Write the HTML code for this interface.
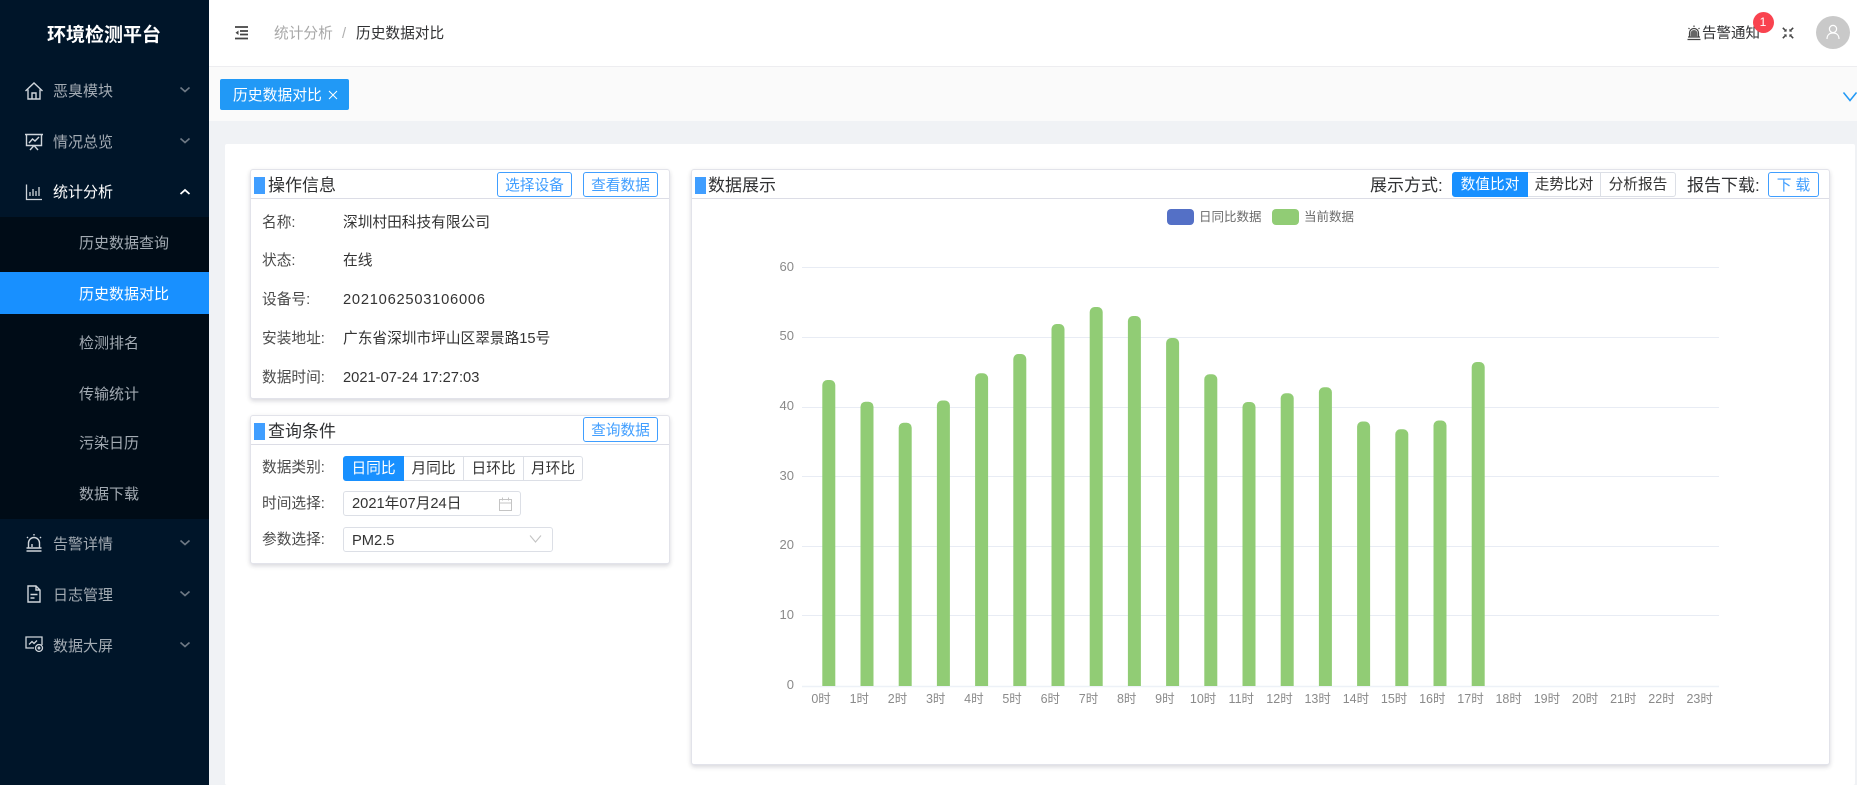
<!DOCTYPE html>
<html lang="zh-CN"><head><meta charset="utf-8"><title>环境检测平台</title>
<style>
*{box-sizing:border-box;margin:0;padding:0}
html,body{width:1857px;height:785px;overflow:hidden;background:#f0f2f5;font-family:"Liberation Sans","Noto Sans CJK SC",sans-serif;color:#303133}
div,span,svg{position:absolute}
.t{line-height:20px;height:20px;white-space:nowrap}
.side{left:0;top:0;width:209px;height:785px;background:#001529}
.sub{left:0;top:217px;width:209px;height:302px;background:#000c17}
.act{left:0;top:272px;width:209px;height:41.5px;background:#1890ff}
.m{left:53px;font-size:15px;color:#a3abb3}
.s{left:79px;font-size:15px;color:#a3abb3}
.p{background:#fff;border:1px solid #e2e3ea;border-radius:3px;box-shadow:0 2px 5px rgba(0,0,40,.16)}
.hr{height:1px;background:#dcdde6}
.mk{width:11px;height:17px;background:#409eff}
.ttl{font-size:17px;color:#303133}
.b{border:1px solid #409eff;border-radius:3px;background:#fff;color:#409eff;font-size:14.7px;text-align:center;height:25px;line-height:26px;white-space:nowrap}
.l{left:262px;font-size:14.7px;color:#4a4a4a}
.v{left:343px;font-size:14.7px;color:#333}
.g{border:1px solid #dcdfe6;background:#fff;color:#333;font-size:14.7px;text-align:center;height:25px;line-height:25px;white-space:nowrap}
.on{background:#1890ff;border-color:#1890ff;color:#fff}
.inp{border:1px solid #dcdfe6;border-radius:3px;background:#fff;height:25px;line-height:25px;padding-left:8px;font-size:14.7px;color:#333;white-space:nowrap}
</style></head><body>

<div class="side"></div><div class="sub"></div><div class="act"></div>
<div class="t" style="left:47px;top:26px;font-size:19px;font-weight:700;color:#fff">环境检测平台</div>

<svg style="left:24px;top:81px" width="20" height="20" viewBox="0 0 20 20" fill="none" stroke="#cfd5db" stroke-width="1.4"><path d="M1.500 10 10 2l8.500 8M4 8.500V18h12V8.500M8 18v-6h4v6"/></svg>
<svg style="left:24px;top:132px" width="20" height="20" viewBox="0 0 20 20" fill="none" stroke="#cfd5db" stroke-width="1.400"><path d="M1 2.500h18M2.500 2.500v11h15v-11M6 18l4-4.500 4 4.500M5 11l3.500-4 2.500 2 4-4"/></svg>
<svg style="left:25px;top:183px" width="18" height="18" viewBox="0 0 18 18" fill="none" stroke="#cfd5db" stroke-width="1.300"><path d="M1.500 1.500V16.500H17M5 13V9M8 13V6M11 13V8M14 13V4"/></svg>
<svg style="left:25px;top:533px" width="18" height="20" viewBox="0 0 18 20" fill="none" stroke="#cfd5db" stroke-width="1.400"><path d="M3.500 15V10a5.500 5.500 0 0 1 11 0v5M1.500 15h15M1.500 18h15M9 1v1.500M2 4l1 1M16 4l-1 1M7 14v-3"/></svg>
<svg style="left:26px;top:584px" width="16" height="20" viewBox="0 0 16 20" fill="none" stroke="#cfd5db" stroke-width="1.400"><path d="M2 2h8l4 4v12H2zM10 2v4h4M4.500 10.500h7M4.500 14h4"/></svg>
<svg style="left:24px;top:635px" width="20" height="18" viewBox="0 0 20 18" fill="none" stroke="#cfd5db" stroke-width="1.300"><path d="M10 13H2V2h16v8M5 9.500l3-3 2 2 3-3"/><circle cx="15" cy="13" r="3.500"/><circle cx="15" cy="13" r=".8"/></svg>

<div class="t m" style="top:82px">恶臭模块</div>
<div class="t m" style="top:133px">情况总览</div>
<div class="t m" style="top:183px;color:#fff">统计分析</div>
<div class="t s" style="top:234px">历史数据查询</div>
<div class="t s" style="top:285px;color:#fff">历史数据对比</div>
<div class="t s" style="top:334px">检测排名</div>
<div class="t s" style="top:385px">传输统计</div>
<div class="t s" style="top:434px">污染日历</div>
<div class="t s" style="top:485px">数据下载</div>
<div class="t m" style="top:535px">告警详情</div>
<div class="t m" style="top:586px">日志管理</div>
<div class="t m" style="top:637px">数据大屏</div>

<svg style="left:179px;top:85px" width="12" height="10" fill="none" stroke="#6d7884" stroke-width="1.600"><path d="M1.500 2.500 6 6.500l4.500-4"/></svg>
<svg style="left:179px;top:136px" width="12" height="10" fill="none" stroke="#6d7884" stroke-width="1.600"><path d="M1.500 2.500 6 6.500l4.500-4"/></svg>
<svg style="left:179px;top:187px" width="12" height="10" fill="none" stroke="#fff" stroke-width="1.800"><path d="M1.500 7 6 3l4.500 4"/></svg>
<svg style="left:179px;top:538px" width="12" height="10" fill="none" stroke="#6d7884" stroke-width="1.600"><path d="M1.500 2.500 6 6.500l4.500-4"/></svg>
<svg style="left:179px;top:589px" width="12" height="10" fill="none" stroke="#6d7884" stroke-width="1.600"><path d="M1.500 2.500 6 6.500l4.500-4"/></svg>
<svg style="left:179px;top:640px" width="12" height="10" fill="none" stroke="#6d7884" stroke-width="1.600"><path d="M1.500 2.500 6 6.500l4.500-4"/></svg>

<!-- header -->
<div style="left:209px;top:0;width:1648px;height:67px;background:#fff;border-bottom:1px solid #ededf0"></div>
<svg style="left:234px;top:25px" width="15" height="15" fill="none" stroke="#444"><path stroke-width="1.700" d="M1 2h13M6 6h8M6 9.500h8M1 13.500h13"/><path d="M4.500 5.500 1.500 7.700 4.500 10z" fill="#444" stroke="none"/></svg>
<div class="t" style="left:274px;top:24px;font-size:14.700px;color:#a8a8a8">统计分析</div>
<div class="t" style="left:342px;top:24px;font-size:14.700px;color:#b0b0b0">/</div>
<div class="t" style="left:356px;top:24px;font-size:14.700px;color:#303133">历史数据对比</div>

<svg style="left:1687px;top:25px" width="14" height="16" fill="none" stroke="#444" stroke-width="1.200"><path d="M2.500 12V8a4.500 4.500 0 0 1 9 0v4M.5 14.500h13M7 .5v1.500M1.500 3l1 1M12.500 3l-1 1M1 12h12" /><path d="M3.500 12V8.500a3.500 3.500 0 0 1 7 0V12z" fill="#666" stroke="none"/></svg>
<div class="t" style="left:1702px;top:24px;font-size:14.500px;color:#303133">告警通知</div>
<div style="left:1752.500px;top:11.500px;width:21px;height:21px;border-radius:50%;background:#f9434f;color:#fff;font-size:12px;line-height:21px;text-align:center">1</div>
<svg style="left:1782px;top:27px" width="12" height="12" fill="none" stroke="#444" stroke-width="1.500"><path d="M.8.800l3 3M11.200.800l-3 3M.8 11.200l3-3M11.200 11.200l-3-3"/><path d="M4.600 1.800 4.600 4.600 1.800 4.600zM7.400 1.800 7.400 4.600 10.200 4.600zM4.600 10.200 4.600 7.400 1.800 7.400zM7.400 10.200 7.400 7.400 10.200 7.400z" fill="#444" stroke="none"/></svg>
<div style="left:1816px;top:16px;width:34px;height:33px;border-radius:50%;background:#c9c9c9"></div>
<svg style="left:1825px;top:24px" width="16" height="16" fill="none" stroke="#fff" stroke-width="1.200"><circle cx="8" cy="5" r="3.600"/><path d="M2 15c0-4 2.500-6 6-6s6 2 6 6"/></svg>

<!-- tag bar -->
<div style="left:209px;top:67px;width:1648px;height:54px;background:#fafafa"></div>
<div style="left:220px;top:79px;width:129px;height:31px;background:#2199f6;border-radius:2px"></div>
<div class="t" style="left:233px;top:86px;font-size:14.800px;color:#fff">历史数据对比</div>
<svg style="left:328px;top:90px" width="10" height="10" stroke="#fff" stroke-width="1"><path d="M1 1l8 8M9 1l-8 8"/></svg>
<svg style="left:1843px;top:90px" width="14" height="14" fill="none" stroke="#2199f6" stroke-width="1.500"><path d="M.5 2.500 7 10.500l6.500-8"/></svg>

<!-- content -->
<div style="left:225px;top:144px;width:1630px;height:641px;background:#fff;border-radius:2px"></div>

<!-- panel 1 -->
<div class="p" style="left:250px;top:169px;width:420px;height:230px"></div>
<div class="hr" style="left:251px;top:198px;width:418px"></div>
<div class="mk" style="left:254px;top:177px"></div>
<div class="t ttl" style="left:268px;top:176px">操作信息</div>
<div class="b" style="left:497px;top:172px;width:75px">选择设备</div>
<div class="b" style="left:583px;top:172px;width:75px">查看数据</div>
<div class="t l" style="top:213px">名称:</div><div class="t v" style="top:213px">深圳村田科技有限公司</div>
<div class="t l" style="top:251px">状态:</div><div class="t v" style="top:251px">在线</div>
<div class="t l" style="top:290px">设备号:</div><div class="t v" style="top:290px;letter-spacing:.75px">2021062503106006</div>
<div class="t l" style="top:329px">安装地址:</div><div class="t v" style="top:329px">广东省深圳市坪山区翠景路15号</div>
<div class="t l" style="top:368px">数据时间:</div><div class="t v" style="top:368px">2021-07-24 17:27:03</div>

<!-- panel 2 -->
<div class="p" style="left:250px;top:415px;width:420px;height:149px"></div>
<div class="hr" style="left:251px;top:444px;width:418px"></div>
<div class="mk" style="left:254px;top:423px"></div>
<div class="t ttl" style="left:268px;top:422px">查询条件</div>
<div class="b" style="left:583px;top:417px;width:75px">查询数据</div>
<div class="t l" style="top:458px">数据类别:</div>
<div class="t l" style="top:494px">时间选择:</div>
<div class="t l" style="top:530px">参数选择:</div>
<div class="g on" style="left:343px;top:456px;width:61px;border-radius:3px 0 0 3px">日同比</div>
<div class="g" style="left:404px;top:456px;width:60px;border-left:0">月同比</div>
<div class="g" style="left:464px;top:456px;width:60px;border-left:0">日环比</div>
<div class="g" style="left:524px;top:456px;width:59px;border-left:0;border-radius:0 3px 3px 0">月环比</div>
<div class="inp" style="left:343px;top:491px;width:178px">2021年07月24日</div>
<svg style="left:498px;top:497px" width="15" height="14" fill="none" stroke="#c4c4c4" stroke-width="1"><path d="M1.500 2.500h12v11h-12zM1.500 6h12M4.500 .5v3M10.500 .5v3"/></svg>
<div class="inp" style="left:343px;top:527px;width:210px;line-height:26px">PM2.5</div>
<svg style="left:529px;top:534px" width="13" height="10" fill="none" stroke="#c4c4c4" stroke-width="1.100"><path d="M1 1.500 6.500 8 12 1.500"/></svg>

<!-- panel 3 -->
<div class="p" style="left:691px;top:169px;width:1139px;height:596px"></div>
<div class="hr" style="left:692px;top:198px;width:1137px"></div>
<div class="mk" style="left:695px;top:177px"></div>
<div class="t ttl" style="left:708px;top:176px">数据展示</div>
<div class="t ttl" style="left:1370px;top:176px">展示方式:</div>
<div class="g on" style="left:1452px;top:172px;width:76px;border-radius:3px 0 0 3px">数值比对</div>
<div class="g" style="left:1528px;top:172px;width:73px;border-left:0">走势比对</div>
<div class="g" style="left:1601px;top:172px;width:75px;border-left:0;border-radius:0 3px 3px 0">分析报告</div>
<div class="t ttl" style="left:1687px;top:176px">报告下载:</div>
<div class="b" style="left:1768px;top:172px;width:51px">下 载</div>

<svg style="left:0;top:0" width="1857" height="785">
<g stroke="#e8ecf4" stroke-width="1">
<path d="M802 267.500H1719M802 337.500H1719M802 407.500H1719M802 476.500H1719M802 546.500H1719M802 615.500H1719"/>
</g>
<path d="M802 686.500H1719" stroke="#edf1f7" stroke-width="1.500"/>
<rect x="1167" y="209" width="27" height="16" rx="4" fill="#5470c6"/>
<rect x="1272" y="209" width="27" height="16" rx="4" fill="#91cc75"/>
<g font-family="'Liberation Sans','Noto Sans CJK SC',sans-serif" font-size="12.500" fill="#6b6b6b">
<text x="1199" y="221">日同比数据</text><text x="1304" y="221">当前数据</text>
</g>
<g fill="#91cc75">
<path d="M822.300 686V385a5 5 0 0 1 5-5h3a5 5 0 0 1 5 5V686z"/>
<path d="M860.500 686V406.700a5 5 0 0 1 5-5h3a5 5 0 0 1 5 5V686z"/>
<path d="M898.700 686V427.700a5 5 0 0 1 5-5h3a5 5 0 0 1 5 5V686z"/>
<path d="M936.900 686V405.500a5 5 0 0 1 5-5h3a5 5 0 0 1 5 5V686z"/>
<path d="M975.100 686V378.300a5 5 0 0 1 5-5h3a5 5 0 0 1 5 5V686z"/>
<path d="M1013.300 686V359a5 5 0 0 1 5-5h3a5 5 0 0 1 5 5V686z"/>
<path d="M1051.500 686V329a5 5 0 0 1 5-5h3a5 5 0 0 1 5 5V686z"/>
<path d="M1089.700 686V312a5 5 0 0 1 5-5h3a5 5 0 0 1 5 5V686z"/>
<path d="M1127.900 686V321a5 5 0 0 1 5-5h3a5 5 0 0 1 5 5V686z"/>
<path d="M1166.100 686V343a5 5 0 0 1 5-5h3a5 5 0 0 1 5 5V686z"/>
<path d="M1204.300 686V379.300a5 5 0 0 1 5-5h3a5 5 0 0 1 5 5V686z"/>
<path d="M1242.500 686V407a5 5 0 0 1 5-5h3a5 5 0 0 1 5 5V686z"/>
<path d="M1280.700 686V398.300a5 5 0 0 1 5-5h3a5 5 0 0 1 5 5V686z"/>
<path d="M1318.900 686V392.300a5 5 0 0 1 5-5h3a5 5 0 0 1 5 5V686z"/>
<path d="M1357.100 686V426.500a5 5 0 0 1 5-5h3a5 5 0 0 1 5 5V686z"/>
<path d="M1395.300 686V434.300a5 5 0 0 1 5-5h3a5 5 0 0 1 5 5V686z"/>
<path d="M1433.500 686V425.500a5 5 0 0 1 5-5h3a5 5 0 0 1 5 5V686z"/>
<path d="M1471.700 686V367a5 5 0 0 1 5-5h3a5 5 0 0 1 5 5V686z"/>
</g>
<g font-family="'Liberation Sans','Noto Sans CJK SC',sans-serif" font-size="13" fill="#8a8a8a" text-anchor="end">
<text x="794" y="271">60</text><text x="794" y="340">50</text><text x="794" y="410">40</text><text x="794" y="480">30</text><text x="794" y="549">20</text><text x="794" y="619">10</text><text x="794" y="689">0</text>
</g>
<g font-family="'Liberation Sans','Noto Sans CJK SC',sans-serif" font-size="12.500" fill="#8a8a8a" text-anchor="middle">
<text x="821.100" y="703">0时</text><text x="859.300" y="703">1时</text><text x="897.500" y="703">2时</text><text x="935.700" y="703">3时</text><text x="973.900" y="703">4时</text><text x="1012.100" y="703">5时</text><text x="1050.300" y="703">6时</text><text x="1088.500" y="703">7时</text><text x="1126.700" y="703">8时</text><text x="1164.900" y="703">9时</text><text x="1203.100" y="703">10时</text><text x="1241.300" y="703">11时</text><text x="1279.500" y="703">12时</text><text x="1317.700" y="703">13时</text><text x="1355.900" y="703">14时</text><text x="1394.100" y="703">15时</text><text x="1432.300" y="703">16时</text><text x="1470.500" y="703">17时</text><text x="1508.700" y="703">18时</text><text x="1546.900" y="703">19时</text><text x="1585.100" y="703">20时</text><text x="1623.300" y="703">21时</text><text x="1661.500" y="703">22时</text><text x="1699.700" y="703">23时</text>
</g>
</svg>
</body></html>
